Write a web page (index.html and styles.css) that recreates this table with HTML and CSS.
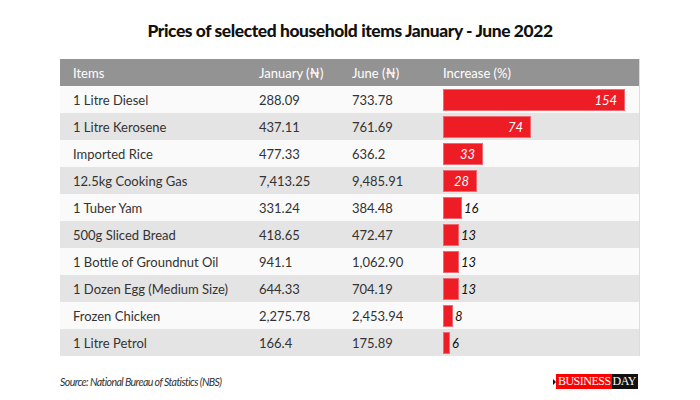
FILE: index.html
```html
<!DOCTYPE html>
<html>
<head>
<meta charset="utf-8">
<link rel="stylesheet" href="styles.css">
</head>
<body>
<div class="page">
  <h1 class="title">Prices of selected household items January - June 2022</h1>
  <div class="table">
    <div class="row head">
      <div class="cell">Items</div>
      <div class="cell">January (₦)</div>
      <div class="cell">June (₦)</div>
      <div class="cell">Increase (%)</div>
    </div>
    <div class="row">
      <div class="cell">1 Litre Diesel</div><div class="cell">288.09</div><div class="cell">733.78</div>
      <div class="cell barcell"><div class="bar in" style="width:182px"><span>154</span></div></div>
    </div>
    <div class="row">
      <div class="cell">1 Litre Kerosene</div><div class="cell">437.11</div><div class="cell">761.69</div>
      <div class="cell barcell"><div class="bar in" style="width:88px"><span>74</span></div></div>
    </div>
    <div class="row">
      <div class="cell">Imported Rice</div><div class="cell">477.33</div><div class="cell">636.2</div>
      <div class="cell barcell"><div class="bar in" style="width:40px"><span>33</span></div></div>
    </div>
    <div class="row">
      <div class="cell">12.5kg Cooking Gas</div><div class="cell">7,413.25</div><div class="cell">9,485.91</div>
      <div class="cell barcell"><div class="bar in" style="width:34px"><span>28</span></div></div>
    </div>
    <div class="row">
      <div class="cell">1 Tuber Yam</div><div class="cell">331.24</div><div class="cell">384.48</div>
      <div class="cell barcell"><div class="bar" style="width:19px"></div><span class="out">16</span></div>
    </div>
    <div class="row">
      <div class="cell">500g Sliced Bread</div><div class="cell">418.65</div><div class="cell">472.47</div>
      <div class="cell barcell"><div class="bar" style="width:16px"></div><span class="out">13</span></div>
    </div>
    <div class="row">
      <div class="cell">1 Bottle of Groundnut Oil</div><div class="cell">941.1</div><div class="cell">1,062.90</div>
      <div class="cell barcell"><div class="bar" style="width:16px"></div><span class="out">13</span></div>
    </div>
    <div class="row">
      <div class="cell">1 Dozen Egg (Medium Size)</div><div class="cell">644.33</div><div class="cell">704.19</div>
      <div class="cell barcell"><div class="bar" style="width:16px"></div><span class="out">13</span></div>
    </div>
    <div class="row">
      <div class="cell">Frozen Chicken</div><div class="cell">2,275.78</div><div class="cell">2,453.94</div>
      <div class="cell barcell"><div class="bar" style="width:10px"></div><span class="out">8</span></div>
    </div>
    <div class="row">
      <div class="cell">1 Litre Petrol</div><div class="cell">166.4</div><div class="cell">175.89</div>
      <div class="cell barcell"><div class="bar" style="width:7px"></div><span class="out">6</span></div>
    </div>
  </div>
  <div class="footer">
    <div class="source">Source: National Bureau of Statistics (NBS)</div>
    <div class="logo"><span class="biz">BUSINESS</span><span class="day">DAY</span></div>
  </div>
</div>
</body>
</html>
```

FILE: styles.css
```css
html, body {
  margin: 0;
  padding: 0;
  background: #ffffff;
}
body {
  font-family: Lato, "Open Sans", sans-serif;
  color: #222;
}
.page {
  width: 700px;
  height: 400px;
  padding: 19px 60px 0 60px;
  box-sizing: border-box;
}
.title {
  margin: 0;
  font-size: 17.4px;
  font-weight: 900;
  text-align: center;
  color: #111;
  line-height: 24px;
  letter-spacing: -0.4px;
}
.table {
  margin-top: 16px;
  width: 580px;
  border-right: 1px solid #dcdcdc;
  box-sizing: border-box;
}
.row {
  display: grid;
  grid-template-columns: 186px 93px 91px 1fr;
  height: 27px;
  align-items: center;
  font-size: 13px;
  color: #333;
  background: #fafafa;
}
.row:nth-child(odd) {
  background: #e4e4e4;
}
.row.head {
  background: #939393;
  color: #ffffff;
}
.cell {
  padding-left: 13px;
  white-space: nowrap;
}
.barcell {
  display: flex;
  align-items: center;
  height: 27px;
  padding-top: 1px;
  box-sizing: border-box;
}
.bar {
  height: 22px;
  background: #ee1c25;
  box-shadow: inset 0 0 0 1px #f06870;
  box-sizing: border-box;
  flex: none;
  display: flex;
  align-items: center;
  justify-content: flex-end;
}
.bar span {
  color: #fff;
  font-style: italic;
  font-size: 13px;
  padding-right: 8px;
}
.out {
  font-style: italic;
  font-size: 13px;
  color: #111;
  margin-left: 2px;
}
.footer {
  display: flex;
  justify-content: space-between;
  align-items: center;
  margin-top: 18px;
}
.source {
  font-size: 10.6px;
  font-style: italic;
  color: #333;
  letter-spacing: -0.6px;
}
.logo {
  display: flex;
  align-items: center;
  font-family: "Liberation Serif", serif;
  font-size: 12px;
  line-height: 15px;
  margin-right: 2px;
  letter-spacing: -0.5px;
}
.logo::before {
  content: "";
  border-left: 3px solid #111;
  border-top: 3px solid transparent;
  border-bottom: 3px solid transparent;
}
.biz {
  background: #ff0000;
  color: #fff;
  padding: 0 1px 0 2px;
}
.day {
  background: #111;
  color: #fff;
  padding: 0 2px 0 1px;
}
```
